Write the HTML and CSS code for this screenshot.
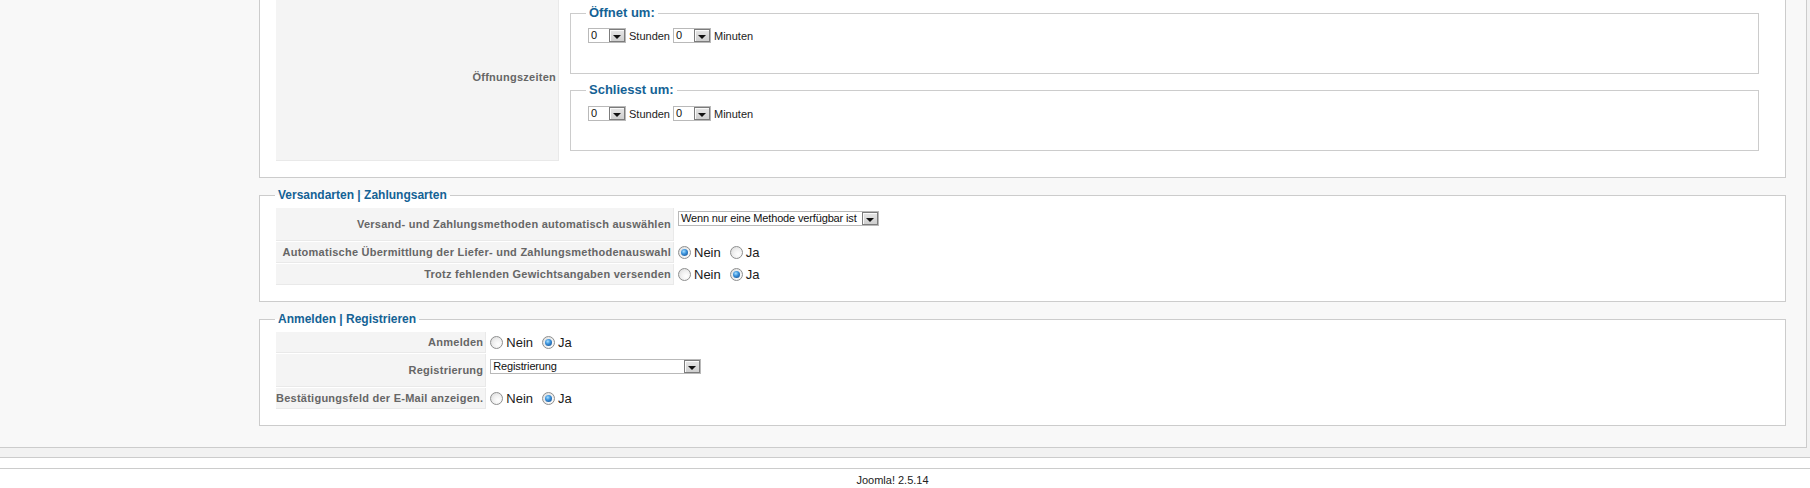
FILE: index.html
```html
<!DOCTYPE html>
<html lang="de">
<head>
<meta charset="utf-8">
<title>Konfiguration</title>
<link rel="stylesheet" href="styles.css">
</head>
<body>
<div class="wrap">
  <div class="panel">
    <div class="fs fs-cut">
      <table class="ptable ptable-cut">
        <tr>
          <td class="key key-w1">Öffnungszeiten</td>
          <td class="val val-times">
            <fieldset class="sub sub-first">
              <legend>Öffnet um:</legend>
              <div class="timerow">
                <span class="sel sel-num"><span class="sel-text">0</span><span class="sel-btn"></span></span>
                <span class="unit">Stunden</span>
                <span class="sel sel-num"><span class="sel-text">0</span><span class="sel-btn"></span></span>
                <span class="unit">Minuten</span>
              </div>
            </fieldset>
            <fieldset class="sub sub-second">
              <legend>Schliesst um:</legend>
              <div class="timerow">
                <span class="sel sel-num"><span class="sel-text">0</span><span class="sel-btn"></span></span>
                <span class="unit">Stunden</span>
                <span class="sel sel-num"><span class="sel-text">0</span><span class="sel-btn"></span></span>
                <span class="unit">Minuten</span>
              </div>
            </fieldset>
          </td>
        </tr>
      </table>
    </div>

    <fieldset class="fs">
      <legend>Versandarten | Zahlungsarten</legend>
      <table class="ptable">
        <tr class="tall">
          <td class="key key-w2">Versand- und Zahlungsmethoden automatisch auswählen</td>
          <td class="val val-top">
            <span class="sel sel-w200"><span class="sel-text">Wenn nur eine Methode verfügbar ist</span><span class="sel-btn"></span></span>
          </td>
        </tr>
        <tr class="std">
          <td class="key">Automatische Übermittlung der Liefer- und Zahlungsmethodenauswahl</td>
          <td class="val">
            <div class="radios">
              <span class="radio on"></span><span class="rlabel">Nein</span>
              <span class="radio"></span><span class="rlabel">Ja</span>
            </div>
          </td>
        </tr>
        <tr class="std">
          <td class="key">Trotz fehlenden Gewichtsangaben versenden</td>
          <td class="val">
            <div class="radios">
              <span class="radio"></span><span class="rlabel">Nein</span>
              <span class="radio on"></span><span class="rlabel">Ja</span>
            </div>
          </td>
        </tr>
      </table>
    </fieldset>

    <fieldset class="fs">
      <legend>Anmelden | Registrieren</legend>
      <table class="ptable">
        <tr class="std">
          <td class="key key-w3">Anmelden</td>
          <td class="val">
            <div class="radios">
              <span class="radio"></span><span class="rlabel">Nein</span>
              <span class="radio on"></span><span class="rlabel">Ja</span>
            </div>
          </td>
        </tr>
        <tr class="tall">
          <td class="key">Registrierung</td>
          <td class="val val-top">
            <span class="sel sel-w210 sel-low"><span class="sel-text">Registrierung</span><span class="sel-btn"></span></span>
          </td>
        </tr>
        <tr class="std">
          <td class="key">Bestätigungsfeld der E-Mail anzeigen.</td>
          <td class="val">
            <div class="radios">
              <span class="radio"></span><span class="rlabel">Nein</span>
              <span class="radio on"></span><span class="rlabel">Ja</span>
            </div>
          </td>
        </tr>
      </table>
    </fieldset>
  </div>
</div>
<div class="footer">Joomla! 2.5.14</div>
</body>
</html>
```

FILE: styles.css
```css
html, body {
  margin: 0;
  padding: 0;
  background: #fff;
}

body {
  font-family: "Liberation Sans", Arial, Helvetica, sans-serif;
  font-size: 11px;
  color: #222;
  overflow: hidden;
}

.wrap {
  background: #f2f2f2;
  border-bottom: 1px solid #ccc;
  padding-bottom: 9px;
}

.panel {
  background: #f8f8f8;
  margin-right: 3px;
  border-right: 1px solid #ccc;
  border-bottom: 1px solid #ccc;
  padding: 0 20px 21px 259px;
}

/* fieldsets */
.fs {
  display: block;
  margin: 0 0 10px;
  padding: 5px 15px 15px;
  border: 1px solid #ccc;
  background: #fff;
  min-width: 0;
}

.fs:last-child {
  margin-bottom: 0;
}

.fs-cut {
  border-top: 0;
  padding-top: 0;
}

legend {
  padding: 0 3px;
  margin: 0;
  font-size: 12px;
  line-height: 14px;
  font-weight: bold;
  color: #146295;
}

/* parameter tables */
.ptable {
  width: 100%;
  border-collapse: separate;
  border-spacing: 1px;
}

.ptable-cut {
  margin-top: -7px;
}

.ptable td {
  box-sizing: border-box;
  padding: 3px;
}

.key {
  background: #f4f4f4;
  color: #666;
  font-weight: bold;
  font-size: 11px;
  letter-spacing: 0.25px;
  text-align: right;
  white-space: nowrap;
  border-bottom: 1px solid #e9e9e9;
  border-right: 1px solid #e9e9e9;
  padding: 3px 2px 3px 0 !important;
  vertical-align: middle;
}

.key-w1 { width: 283px; }
.key-w2 { width: 398px; }
.key-w3 { width: 210px; }

.std td { height: 21px; }
.tall td { height: 33px; }

.val {
  vertical-align: middle;
  text-align: left;
}

.val-top {
  vertical-align: top;
}

.val-times {
  vertical-align: top;
  padding: 11px 10px 10px !important;
}

/* inner fieldsets */
.sub {
  margin: 0;
  padding: 8px 15px 29px;
  border: 1px solid #ccc;
  min-width: 0;
}

.sub-first {
  padding-top: 7px;
  padding-bottom: 30px;
}

.sub legend {
  font-size: 13px;
  line-height: 16px;
}

.sub-second {
  margin-top: 8px;
}

.timerow {
  display: flex;
  align-items: center;
  gap: 3px;
  padding-left: 2px;
  height: 15px;
}

.unit {
  font-size: 11px;
  color: #222;
}

/* fake select boxes */
.sel {
  display: inline-flex;
  align-items: stretch;
  box-sizing: border-box;
  height: 15px;
  border: 1px solid #b9b9b9;
  background: #fff;
  font-size: 11px;
  line-height: 13px;
  color: #111;
  vertical-align: top;
}

.sel-num { width: 38px; }
.sel-w200 { width: 201px; }
.sel-w210 { width: 211px; }
.sel-low { margin-top: 2px; }

.sel-text {
  flex: 1;
  padding-left: 2px;
  letter-spacing: -0.15px;
  white-space: nowrap;
  overflow: hidden;
}

.sel-btn {
  box-sizing: border-box;
  width: 16px;
  flex: none;
  border: 1px solid #7c7c7c;
  background: linear-gradient(#e6e6e6, #cfcfcf);
  box-shadow: inset 1px 1px 0 #fafafa;
  display: flex;
  align-items: flex-end;
  justify-content: center;
  padding-bottom: 2px;
}

.sel-btn::after {
  content: "";
  width: 0;
  height: 0;
  border-left: 4px solid transparent;
  border-right: 4px solid transparent;
  border-top: 4px solid #111;
}

/* radios */
.radios {
  display: flex;
  align-items: center;
  height: 14px;
}

.radio {
  box-sizing: border-box;
  width: 13px;
  height: 13px;
  flex: none;
  border-radius: 50%;
  border: 1px solid #8e8f8f;
  background: radial-gradient(circle at 65% 65%, #ffffff 0, #f1f1f1 45%, #d6d6d6 100%);
  display: inline-flex;
  align-items: center;
  justify-content: center;
  margin-right: 3px;
}

.radio.on::after {
  content: "";
  width: 7px;
  height: 7px;
  border-radius: 50%;
  background: radial-gradient(circle at 40% 35%, #a8e0ff 0, #3c93dc 40%, #0e4282 100%);
}

.rlabel {
  font-size: 13px;
  line-height: 14px;
  color: #1a1a1a;
  margin-right: 9px;
}

/* footer */
.footer {
  margin-top: 10px;
  border-top: 1px solid #ccc;
  padding: 4px 25px 0 0;
  text-align: center;
  font-size: 11px;
  line-height: 14px;
  color: #222;
}
```
